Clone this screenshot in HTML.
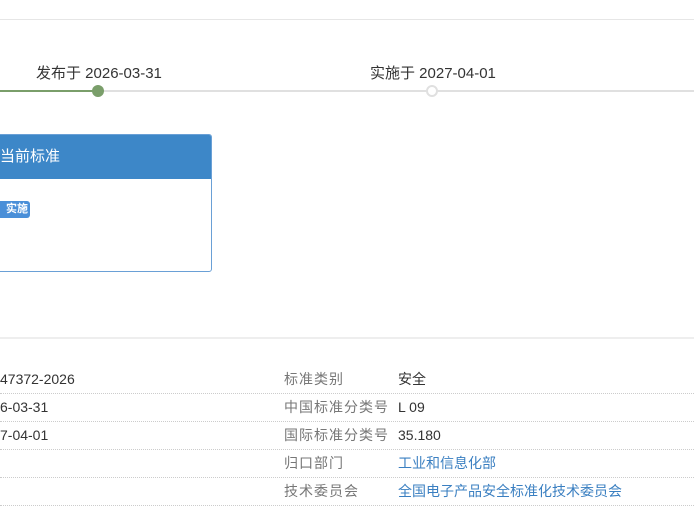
<!DOCTYPE html>
<html><head><meta charset="utf-8"><style>
body{margin:0;width:694px;height:532px;overflow:hidden;background:#fff;font-family:"Liberation Sans","Noto Sans CJK SC",sans-serif;position:relative}
.a{position:absolute}
.lbl{font-size:15px;color:#333;white-space:nowrap}
.row{position:absolute;left:0;width:694px;height:27px;border-bottom:1px dotted #ccc;font-size:14px;line-height:27px}
.row span{position:absolute;top:0;white-space:nowrap}
.k{left:284px;color:#777;letter-spacing:1px}
.v{left:398px;color:#333}
.lk{color:#3a7fc1!important}
</style></head><body>
<div class="a" style="left:0;top:19px;width:694px;height:1px;background:#e6e6e6"></div>
<div class="a lbl" style="left:36px;top:62px">发布于 2026-03-31</div>
<div class="a lbl" style="left:370px;top:62px">实施于 2027-04-01</div>
<div class="a" style="left:0;top:90px;width:694px;height:2px;background:#e0e0e0"></div>
<div class="a" style="left:0;top:90px;width:98px;height:2px;background:#7a9e6a"></div>
<div class="a" style="left:92px;top:85px;width:12px;height:12px;border-radius:50%;background:#7a9e6a"></div>
<div class="a" style="left:426px;top:85px;width:8px;height:8px;border-radius:50%;border:2px solid #e0e0e0;background:#fff"></div>
<div class="a" style="left:-10px;top:134px;width:220px;height:136px;border:1px solid #6aa0d6;border-radius:3px;overflow:hidden">
<div style="height:44px;background:#3d87c8;color:#fff;font-size:15px;line-height:44px;padding-left:9px">当前标准</div>
<div class="a" style="left:0;top:66px;width:39px;height:17px;background:#4a8fd8;border-radius:3px;color:#fff;font-size:11px;font-weight:bold;line-height:17px;text-align:right;padding-right:2px;box-sizing:border-box">实施</div>
</div>
<div class="a" style="left:0;top:337px;width:694px;height:2px;background:#eee"></div>
<div class="row" style="top:366px"><span class="v" style="left:0">47372-2026</span><span class="k">标准类别</span><span class="v">安全</span></div>
<div class="row" style="top:394px"><span class="v" style="left:0">6-03-31</span><span class="k">中国标准分类号</span><span class="v">L 09</span></div>
<div class="row" style="top:422px"><span class="v" style="left:0">7-04-01</span><span class="k">国际标准分类号</span><span class="v">35.180</span></div>
<div class="row" style="top:450px"><span class="k">归口部门</span><span class="v lk">工业和信息化部</span></div>
<div class="row" style="top:478px"><span class="k">技术委员会</span><span class="v lk">全国电子产品安全标准化技术委员会</span></div>
</body></html>
